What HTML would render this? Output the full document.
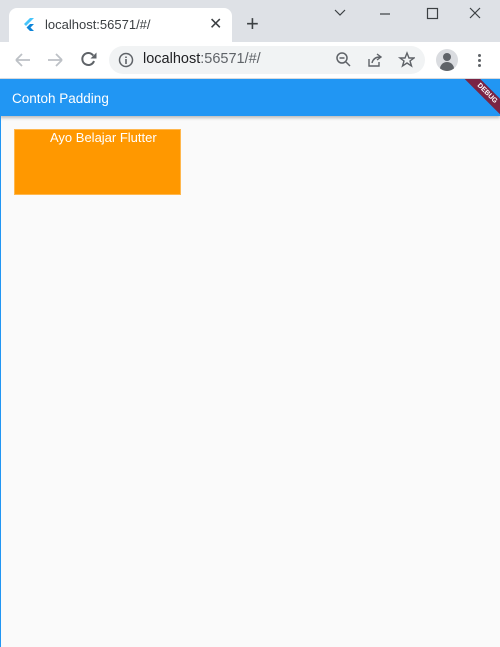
<!DOCTYPE html>
<html><head><style>
*{margin:0;padding:0;box-sizing:border-box}
body{width:500px;height:647px;overflow:hidden;background:#fafafa;font-family:"Liberation Sans",Arial,sans-serif;position:relative}
.abs{position:absolute}
</style></head><body>
<div class="abs" style="left:0;top:0;width:500px;height:42px;background:#dee1e6"></div>
<div class="abs" style="left:9px;top:8px;width:223px;height:36px;background:#fff;border-radius:8px 8px 0 0"></div>
<svg class="abs" style="left:23px;top:18px" width="12" height="14" viewBox="0 0 12 14"><path d="M7 0L1 6l2 2 8-8z" fill="#47c5fb"/><path d="M7 6L3.5 9.5 7 13h4L7.5 9.5 11 6z" fill="#0d84d8"/></svg>
<div class="abs" style="left:45px;top:17px;font-size:13px;color:#3c4043">localhost:56571/#/</div>
<div class="abs" style="left:209px;top:14px;font-size:16px;color:#3c4043">✕</div>
<div class="abs" style="left:246px;top:11px;font-size:22px;color:#3c4043">+</div>
<svg class="abs" style="left:330px;top:6px" width="160" height="16" viewBox="0 0 160 16"><path d="M5 4l5 5 5-5" stroke="#3c4043" fill="none" stroke-width="1.2"/><path d="M50 8h10" stroke="#3c4043" stroke-width="1.2"/><rect x="97.5" y="2.5" width="10" height="10" stroke="#3c4043" fill="none" stroke-width="1.2"/><path d="M140 2l10 10M150 2l-10 10" stroke="#3c4043" stroke-width="1.2"/></svg>
<div class="abs" style="left:0;top:42px;width:500px;height:37px;background:#fff"></div>
<svg class="abs" style="left:12px;top:50px" width="90" height="20" viewBox="0 0 90 20"><path d="M4 10h14M4 10l6-6M4 10l6 6" stroke="#bdc1c6" stroke-width="1.8" fill="none"/><path d="M36 10h14M50 10l-6-6M50 10l-6 6" stroke="#bdc1c6" stroke-width="1.8" fill="none"/><path d="M81.2 5.5A6 6 0 1 0 82 11" stroke="#5f6368" stroke-width="2" fill="none"/><path d="M84.5 2.5v6h-6z" fill="#5f6368"/></svg>
<div class="abs" style="left:109px;top:46px;width:316px;height:28px;background:#f1f3f4;border-radius:14px"></div>
<svg class="abs" style="left:118px;top:52px" width="16" height="16" viewBox="0 0 16 16"><circle cx="8" cy="8" r="6.5" stroke="#5f6368" stroke-width="1.5" fill="none"/><path d="M8 7v5M8 4.5v1.5" stroke="#5f6368" stroke-width="1.6"/></svg>
<div class="abs" style="left:143px;top:51px;font-size:14.5px;color:#202124">localhost<span style="color:#5f6368">:56571/#/</span></div>
<svg class="abs" style="left:335px;top:51px" width="80" height="18" viewBox="0 0 80 18"><circle cx="7" cy="7" r="5" stroke="#5f6368" stroke-width="1.5" fill="none"/><path d="M11 11l4 4M4.5 7h5" stroke="#5f6368" stroke-width="1.5"/><path d="M34 8v7h10v-4M37 12c1-4 4-6 8-6M42 3l4 3-4 3" stroke="#5f6368" stroke-width="1.4" fill="none"/><path d="M72 2l2 5h5l-4 3 1.5 5-4.5-3-4.5 3 1.5-5-4-3h5z" stroke="#5f6368" stroke-width="1.4" fill="none"/></svg>
<div class="abs" style="left:436px;top:49px;width:22px;height:22px;border-radius:50%;background:#dadce0;overflow:hidden"><div class="abs" style="left:7px;top:4px;width:8px;height:8px;border-radius:50%;background:#5f6368"></div><div class="abs" style="left:4px;top:13px;width:14px;height:10px;border-radius:7px 7px 0 0;background:#5f6368"></div></div>
<div class="abs" style="left:478px;top:54px;width:3px;height:3px;border-radius:50%;background:#5f6368;box-shadow:0 5px 0 #5f6368,0 10px 0 #5f6368"></div>
<div class="abs" style="left:0;top:78px;width:500px;height:1px;background:#dadce0"></div>
<div class="abs" style="left:0;top:79px;width:500px;height:37px;background:#2196f3;box-shadow:0 2px 3px rgba(0,0,0,.25);overflow:hidden">
<div class="abs" style="left:452px;top:9px;width:70px;height:11px;background:#7a2444;transform:rotate(45deg);color:#fff;font-size:7px;font-weight:bold;text-align:center;line-height:11px">DEBUG</div>
</div>
<div class="abs" style="left:12px;top:91px;font-size:13.5px;color:#fff">Contoh Padding</div>
<div class="abs" style="left:0;top:79px;width:1px;height:568px;background:#2196f3"></div>
<div class="abs" style="left:14px;top:129px;width:167px;height:66px;background:#ff9800;border:1px solid #ffb74d"></div>
<div class="abs" style="left:50px;top:130px;font-size:13px;color:#fff">Ayo Belajar Flutter</div>
</body></html>
